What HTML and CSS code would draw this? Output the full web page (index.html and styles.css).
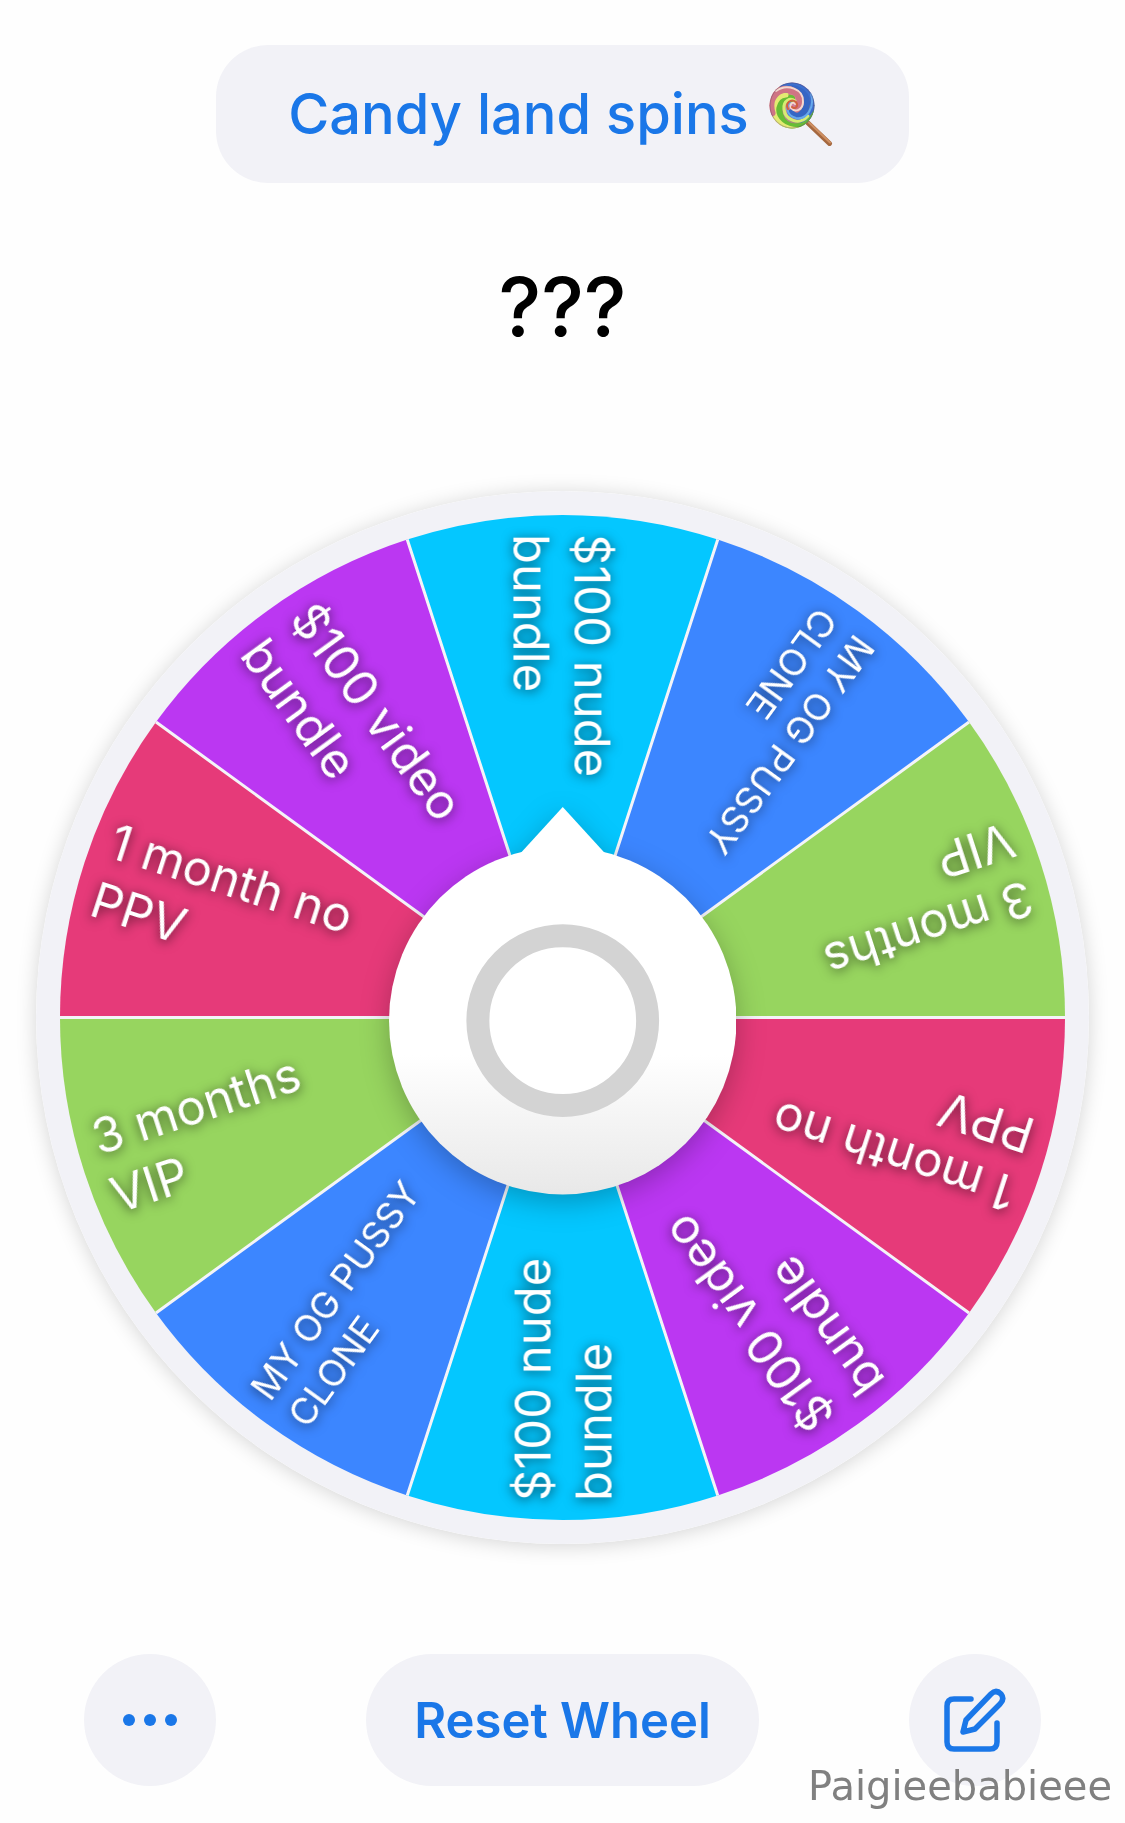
FILE: index.html
```
<!DOCTYPE html>
<html lang="en">
<head>
<meta charset="utf-8">
<meta name="viewport" content="width=device-width, initial-scale=1">
<title>Candy land spins</title>
<link rel="stylesheet" href="styles.css">
</head>
<body>
<main class="app">
  <button class="title" type="button">
    <span>Candy land spins</span>
    <svg class="lollipop" viewBox="0 0 64 64" aria-hidden="true">
      <defs>
        <clipPath id="candy"><ellipse cx="23" cy="23.500" rx="22.500" ry="23"/></clipPath>
        <linearGradient id="rim" x1="0" y1="0" x2="1" y2="1">
          <stop offset="0" stop-color="#e08a68"/><stop offset=".5" stop-color="#cf7f9b"/><stop offset="1" stop-color="#4fa83a"/>
        </linearGradient>
      </defs>
      <path d="M39 41L60.500 61.500" stroke="#a5683f" stroke-width="5" stroke-linecap="round"/>
      <path d="M40 40.500L61 60.500" stroke="#cf9063" stroke-width="2" stroke-linecap="round"/>
      <g clip-path="url(#candy)" fill="none" stroke-linecap="round">
        <rect width="48" height="48" fill="url(#rim)"/>
        <path d="M14 1C34 -4 50 10 45 29C42 38 34 38 29 33" stroke="#3c70cf" stroke-width="10"/>
        <path d="M15 8C30 3 40 14 37 25C35 34 27 35 22 31" stroke="#3566c4" stroke-width="7"/>
        <path d="M47 32C38 50 15 50 10 32C8 22 14 15 22 17" stroke="#67bd35" stroke-width="8"/>
        <path d="M36 47C15 51 3 37 5 25C7 17 12 13 17 13" stroke="#e4ea72" stroke-width="5"/>
        <path d="M3 31C-2 14 11 5 22 8C31 11 34 20 28 27" stroke="#cf7484" stroke-width="7"/>
        <path d="M7 9C18 1 35 7 34 20C34 28 26 31 22 26C20 22 24 19 26 22" stroke="#f3d8cf" stroke-width="2"/>
        <path d="M39 34C30 44 16 38 15 27C14 19 21 15 26 19" stroke="#d6ed72" stroke-width="3"/>
        <path d="M42 12C46 25 38 38 27 36C18 34 16 25 21 20" stroke="#66a8ec" stroke-width="2"/>
        <path d="M19 27C16 21 22 16 27 20C30 24 26 28 23 25" stroke="#d2603e" stroke-width="2"/>
        <ellipse cx="23" cy="23.500" rx="22" ry="22.500" stroke="#5b4a72" stroke-opacity=".4"/>
      </g>
    </svg>
  </button>

  <h1 class="result">???</h1>

  <div class="wheel">
    <svg class="disc" viewBox="-527 -527 1054 1054" role="img" aria-label="Prize wheel">
      <circle class="frame" r="527"/>
      <g class="wedges">
        <path class="pink" d="M0 0L503 0A503 503 0 0 1 406.900 295.700Z"/>
        <path class="purple" d="M0 0L406.900 295.700A503 503 0 0 1 155.400 478.400Z"/>
        <path class="cyan" d="M0 0L155.400 478.400A503 503 0 0 1 -155.400 478.400Z"/>
        <path class="blue" d="M0 0L-155.400 478.400A503 503 0 0 1 -406.900 295.700Z"/>
        <path class="green" d="M0 0L-406.900 295.700A503 503 0 0 1 -503 0Z"/>
        <path class="pink" d="M0 0L-503 0A503 503 0 0 1 -406.900 -295.700Z"/>
        <path class="purple" d="M0 0L-406.900 -295.700A503 503 0 0 1 -155.400 -478.400Z"/>
        <path class="cyan" d="M0 0L-155.400 -478.400A503 503 0 0 1 155.400 -478.400Z"/>
        <path class="blue" d="M0 0L155.400 -478.400A503 503 0 0 1 406.900 -295.700Z"/>
        <path class="green" d="M0 0L406.900 -295.700A503 503 0 0 1 503 0Z"/>
      </g>
      <path class="spokes" d="M-503 0H503M-406.900 -295.700L406.900 295.700M-155.400 -478.400L155.400 478.400M155.400 -478.400L-155.400 478.400M406.900 -295.700L-406.900 295.700"/>
      <g class="labels">
        <text transform="rotate(198)"><tspan x="-484" y="-12">1 month no</tspan><tspan x="-484" y="49">PPV</tspan></text>
        <text transform="rotate(234)"><tspan x="-484" y="-12">$100 video</tspan><tspan x="-484" y="49">bundle</tspan></text>
        <text transform="rotate(270)"><tspan x="-484" y="-12">$100 nude</tspan><tspan x="-484" y="49">bundle</tspan></text>
        <text class="small" transform="rotate(306)"><tspan x="-484" y="-10">MY OG PUSSY</tspan><tspan x="-484" y="36">CLONE</tspan></text>
        <text transform="rotate(342)"><tspan x="-484" y="-12">3 months</tspan><tspan x="-484" y="49">VIP</tspan></text>
        <text transform="rotate(18)"><tspan x="-484" y="-12">1 month no</tspan><tspan x="-484" y="49">PPV</tspan></text>
        <text transform="rotate(54)"><tspan x="-484" y="-12">$100 video</tspan><tspan x="-484" y="49">bundle</tspan></text>
        <text transform="rotate(90)"><tspan x="-484" y="-12">$100 nude</tspan><tspan x="-484" y="49">bundle</tspan></text>
        <text class="small" transform="rotate(126)"><tspan x="-484" y="-10">MY OG PUSSY</tspan><tspan x="-484" y="36">CLONE</tspan></text>
        <text transform="rotate(162)"><tspan x="-484" y="-12">3 months</tspan><tspan x="-484" y="49">VIP</tspan></text>
      </g>
    </svg>
    <button class="hub" type="button" aria-label="Spin">
      <svg viewBox="-174 -214 348 422" aria-hidden="true">
        <defs>
          <linearGradient id="dome" x1="0" y1="0" x2="0" y2="1">
            <stop offset=".6" stop-color="#fff"/><stop offset="1" stop-color="#e8e8e8"/>
          </linearGradient>
        </defs>
        <path fill="#fff" d="M0 -214L-43 -167L0 -150L43 -167Z"/>
        <circle r="174" fill="url(#dome)"/>
        <circle r="85" fill="#fff" stroke="#d3d3d3" stroke-width="23"/>
      </svg>
    </button>
  </div>

  <nav class="actions">
    <button class="round" type="button" aria-label="More">
      <svg viewBox="0 0 54 12" width="54" height="12" fill="currentColor" aria-hidden="true"><circle cx="6" cy="6" r="6"/><circle cx="27" cy="6" r="6"/><circle cx="48" cy="6" r="6"/></svg>
    </button>
    <button class="reset" type="button">Reset Wheel</button>
    <button class="round" type="button" aria-label="Edit">
      <svg viewBox="0 0 64 64" width="64" height="64" fill="none" stroke="currentColor" stroke-width="5.500" stroke-linecap="round" stroke-linejoin="round" aria-hidden="true"><path d="M28 11H11Q4 11 4 18V54Q4 61 11 61H47Q54 61 54 54V35"/><path d="M20 44L23 32L48 6Q53 1 58 6Q62 11 57 16L32 41Z"/></svg>
    </button>
  </nav>
  <p class="watermark">Paigieebabieee</p>
</main>
</body>
</html>
```
FILE: styles.css
```
* {
  box-sizing: border-box;
}

body {
  margin: 0;
  background: #fefefe;
  color: #000;
  font-family: Inter, "Liberation Sans", sans-serif;
}

button {
  border: 0;
  padding: 0;
  background: #f2f2f7;
  color: #1a77e8;
  font: inherit;
  cursor: pointer;
}

.app {
  position: relative;
  display: flex;
  flex-direction: column;
  align-items: center;
  padding: 45px 36px 37px;
}

.title {
  display: flex;
  align-items: center;
  justify-content: center;
  gap: 20px;
  height: 138px;
  padding: 0 76px 0 72px;
  border-radius: 52px;
  font-size: 56px;
  font-weight: 500;
}

.lollipop {
  width: 64px;
  height: 64px;
}

.result {
  margin: 72px 0 132px;
  font-size: 81px;
  font-weight: 500;
  line-height: 104px;
}

.wheel {
  display: grid;
  place-items: center;
  width: 100%;
}

.disc,
.hub {
  grid-area: 1 / 1;
}

.disc {
  display: block;
  width: 100%;
  border-radius: 50%;
  box-shadow: 0 2px 20px rgba(0, 0, 0, .17);
}

.frame { fill: #f2f2f7; }
.pink { fill: #e63a79; }
.purple { fill: #bb37f2; }
.cyan { fill: #04c7ff; }
.blue { fill: #3c86ff; }
.green { fill: #97d55f; }

.spokes {
  stroke: #f4f4f8;
  stroke-width: 3;
}

.labels {
  fill: #fff;
  font-size: 49px;
  filter: drop-shadow(0 2px 6px rgba(0, 0, 0, .65));
}

.labels .small {
  font-size: 37px;
}

.hub {
  width: 33%;
  background: none;
  border-radius: 50%;
}

.hub svg {
  display: block;
  width: 100%;
  filter: drop-shadow(0 8px 14px rgba(0, 0, 0, .25));
}

.actions {
  display: flex;
  align-items: center;
  justify-content: space-between;
  align-self: stretch;
  margin: 110px 48px 0;
}

.round {
  display: grid;
  place-items: center;
  width: 132px;
  height: 132px;
  border-radius: 50%;
}

.reset {
  height: 132px;
  padding: 0 48px;
  border-radius: 66px;
  font-size: 49px;
  font-weight: 600;
}

.watermark {
  position: absolute;
  right: 13px;
  bottom: 13px;
  margin: 0;
  color: #808080;
  font-family: "DejaVu Sans", sans-serif;
  font-size: 40px;
  line-height: 48px;
}
```
